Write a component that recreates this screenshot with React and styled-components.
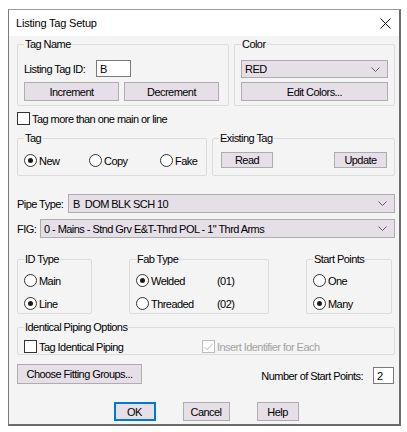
import React from "react";
import styled, { createGlobalStyle } from "styled-components";

const GlobalStyle = createGlobalStyle`
  html, body {
    margin: 0;
    padding: 0;
    background: #ffffff;
  }
  body {
    font-family: "Liberation Sans", Arial, sans-serif;
  }
`;

const Window = styled.div`
  box-sizing: border-box;
  width: 393px;
  margin: 9px 0 0 8px;
  background: #f4f4f4;
  border-left: 1px solid #7a7a7a;
  border-top: 1px solid #9c9c9c;
  border-right: 2px solid #6b6b6b;
  border-bottom: 2px solid #6b6b6b;
  font-size: 11px;
  letter-spacing: -0.55px;
  color: #000;
`;

const TitleBar = styled.div`
  height: 26px;
  background: #ffffff;
  display: flex;
  align-items: center;
  justify-content: space-between;
  padding: 0 8px 0 7px;
`;

const Title = styled.span`
  font-size: 11px;
  letter-spacing: -0.2px;
`;

const Body = styled.div`
  padding: 2px 4px 3px 8px;
`;

const Group = styled.fieldset`
  box-sizing: border-box;
  margin: 0;
  min-width: 0;
  width: ${(p) => (p.$w ? `${p.$w}px` : "auto")};
  flex: ${(p) => (p.$w ? "none" : "1")};
  border: 1px solid #dcdcdc;
  border-radius: 2px;
  padding: 0 6px ${(p) => p.$pb ?? 4}px;
`;

const Legend = styled.legend`
  padding: 0 1px;
  line-height: 13px;
`;

const Row = styled.div`
  display: flex;
  align-items: ${(p) => p.$align || "center"};
  justify-content: ${(p) => p.$justify || "flex-start"};
  gap: ${(p) => p.$gap || 0}px;
  margin-top: ${(p) => p.$mt || 0}px;
`;

const Stack = styled.div`
  display: flex;
  flex-direction: column;
  gap: ${(p) => p.$gap || 0}px;
  margin-top: ${(p) => p.$mt || 0}px;
`;

const Grid = styled.div`
  display: grid;
  grid-template-columns: ${(p) => p.$cols};
  column-gap: ${(p) => p.$cgap || 0}px;
  row-gap: ${(p) => p.$rgap || 0}px;
  align-items: ${(p) => p.$align || "center"};
  margin-top: ${(p) => p.$mt || 0}px;
`;

const FormLabel = styled.span`
  flex: none;
  width: ${(p) => (p.$w ? `${p.$w}px` : "auto")};
`;

const TextBox = styled.div`
  box-sizing: border-box;
  width: ${(p) => p.$w}px;
  height: ${(p) => p.$h || 17}px;
  background: #ffffff;
  border: 1px solid #7a7a7a;
  padding-left: 3px;
  display: flex;
  align-items: center;
  flex: none;
`;

const Button = styled.button`
  box-sizing: border-box;
  width: ${(p) => p.$w}px;
  height: ${(p) => p.$h || 19}px;
  padding: 0;
  font: inherit;
  letter-spacing: inherit;
  color: #000;
  background: #e6dfe7;
  border: 1px solid ${(p) => (p.$default ? "#0078d7" : "#adadad")};
  box-shadow: ${(p) => (p.$default ? "inset 0 0 0 1px #0078d7" : "none")};
  flex: none;
`;

const SelectBox = styled.div`
  box-sizing: border-box;
  flex: 1;
  height: ${(p) => p.$h || 19}px;
  background: #e6dfe7;
  border: 1px solid #adadad;
  display: flex;
  align-items: center;
  justify-content: space-between;
  padding: 0 7px 0 ${(p) => p.$pl || 3}px;
  white-space: pre;
`;

const Option = styled.label`
  display: flex;
  align-items: center;
  gap: 2px;
  color: ${(p) => (p.$disabled ? "#a3a3a3" : "#000")};
  width: ${(p) => (p.$w ? `${p.$w}px` : "auto")};
`;

const RadioCircle = styled.span`
  box-sizing: border-box;
  width: 13px;
  height: 13px;
  border-radius: 50%;
  border: 1px solid #333333;
  background: #ffffff;
  display: flex;
  align-items: center;
  justify-content: center;
  flex: none;

  &::after {
    content: "";
    width: 5px;
    height: 5px;
    border-radius: 50%;
    background: ${(p) => (p.$on ? "#1a1a1a" : "transparent")};
  }
`;

const CheckSquare = styled.span`
  box-sizing: border-box;
  width: 13px;
  height: 13px;
  border: 1px solid ${(p) => (p.$disabled ? "#bcbcbc" : "#333333")};
  background: #ffffff;
  display: flex;
  align-items: center;
  justify-content: center;
  flex: none;
`;

const Chevron = () => (
  <svg width="9" height="5" viewBox="0 0 9 5">
    <path d="M0.5 0.5 L4.5 4.5 L8.5 0.5" fill="none" stroke="#5f5f5f" strokeWidth="1" />
  </svg>
);

const CloseIcon = () => (
  <svg width="11" height="11" viewBox="0 0 11 11">
    <path d="M0.5 0.5 L10.5 10.5 M10.5 0.5 L0.5 10.5" stroke="#111" strokeWidth="1" />
  </svg>
);

const Radio = ({ on, children, w }) => (
  <Option $w={w}>
    <RadioCircle $on={on} />
    {children}
  </Option>
);

const Check = ({ on, disabled, children, w }) => (
  <Option $w={w} $disabled={disabled}>
    <CheckSquare $disabled={disabled}>
      {on && (
        <svg width="9" height="8" viewBox="0 0 9 8">
          <path d="M0.5 4 L3.2 6.8 L8.5 0.8" fill="none" stroke={disabled ? "#bcbcbc" : "#222"} strokeWidth="1" />
        </svg>
      )}
    </CheckSquare>
    {children}
  </Option>
);

const Select = ({ children, h, pl }) => (
  <SelectBox $h={h} $pl={pl}>
    <span>{children}</span>
    <Chevron />
  </SelectBox>
);

export default function App() {
  return (
    <>
      <GlobalStyle />
      <Window>
        <TitleBar>
          <Title>Listing Tag Setup</Title>
          <CloseIcon />
        </TitleBar>
        <Body>
          <Row $gap={5} $align="stretch">
            <Group $w={212}>
              <Legend>Tag Name</Legend>
              <Row $mt={9}>
                <FormLabel $w={72}>Listing Tag ID:</FormLabel>
                <TextBox $w={35}>B</TextBox>
              </Row>
              <Row $mt={5} $gap={5}>
                <Button $w={95}>Increment</Button>
                <Button $w={95}>Decrement</Button>
              </Row>
            </Group>
            <Group>
              <Legend>Color</Legend>
              <Stack $mt={9} $gap={4}>
                <Row>
                  <Select h={18}>RED</Select>
                </Row>
                <Button $w={147}>Edit Colors...</Button>
              </Stack>
            </Group>
          </Row>

          <Row $mt={6}>
            <Check>Tag more than one main or line</Check>
          </Row>

          <Row $gap={5} $mt={7} $align="stretch">
            <Group $w={190} $pb={8}>
              <Legend>Tag</Legend>
              <Grid $cols="65px 71px auto" $mt={9}>
                <Radio on>New</Radio>
                <Radio>Copy</Radio>
                <Radio>Fake</Radio>
              </Grid>
            </Group>
            <Group $pb={7}>
              <Legend>Existing Tag</Legend>
              <Row $mt={7} $justify="space-between" style={{ padding: "0 1px 0 2px" }}>
                <Button $w={52} $h={16}>Read</Button>
                <Button $w={53} $h={16}>Update</Button>
              </Row>
            </Group>
          </Row>

          <Row $mt={18}>
            <FormLabel $w={51}>Pipe Type:</FormLabel>
            <Select pl={4}>B  DOM BLK SCH 10</Select>
          </Row>
          <Row $mt={6}>
            <FormLabel $w={23}>FIG:</FormLabel>
            <Select>0 - Mains - Stnd Grv E&amp;T-Thrd POL - 1" Thrd Arms</Select>
          </Row>

          <Grid $cols="75px 140px 86px" $cgap={37} $mt={15} $align="stretch">
            <Group $pb={3}>
              <Legend>ID Type</Legend>
              <Stack $mt={8} $gap={10}>
                <Radio>Main</Radio>
                <Radio on>Line</Radio>
              </Stack>
            </Group>
            <Group $pb={3}>
              <Legend>Fab Type</Legend>
              <Grid $cols="81px auto" $rgap={10} $mt={8}>
                <Radio on>Welded</Radio>
                <span>(01)</span>
                <Radio>Threaded</Radio>
                <span>(02)</span>
              </Grid>
            </Group>
            <Group $pb={3}>
              <Legend>Start Points</Legend>
              <Stack $mt={8} $gap={10}>
                <Radio>One</Radio>
                <Radio on>Many</Radio>
              </Stack>
            </Group>
          </Grid>

          <Row $mt={7}>
            <Group $pb={1}>
              <Legend>Identical Piping Options</Legend>
              <Row $mt={6}>
                <Check w={178}>Tag Identical Piping</Check>
                <Check on disabled>Insert Identifier for Each</Check>
              </Row>
            </Group>
          </Row>

          <Row $mt={9} $justify="space-between" $align="flex-end">
            <Button $w={125} $h={20}>Choose Fitting Groups...</Button>
            <Row $gap={10} style={{ marginRight: 1 }}>
              <span>Number of Start Points:</span>
              <TextBox $w={21} $h={17}>2</TextBox>
            </Row>
          </Row>

          <Row $mt={18} $justify="center" $gap={27}>
            <Button $w={42} $default>OK</Button>
            <Button $w={47}>Cancel</Button>
            <Button $w={42}>Help</Button>
          </Row>
        </Body>
      </Window>
    </>
  );
}
